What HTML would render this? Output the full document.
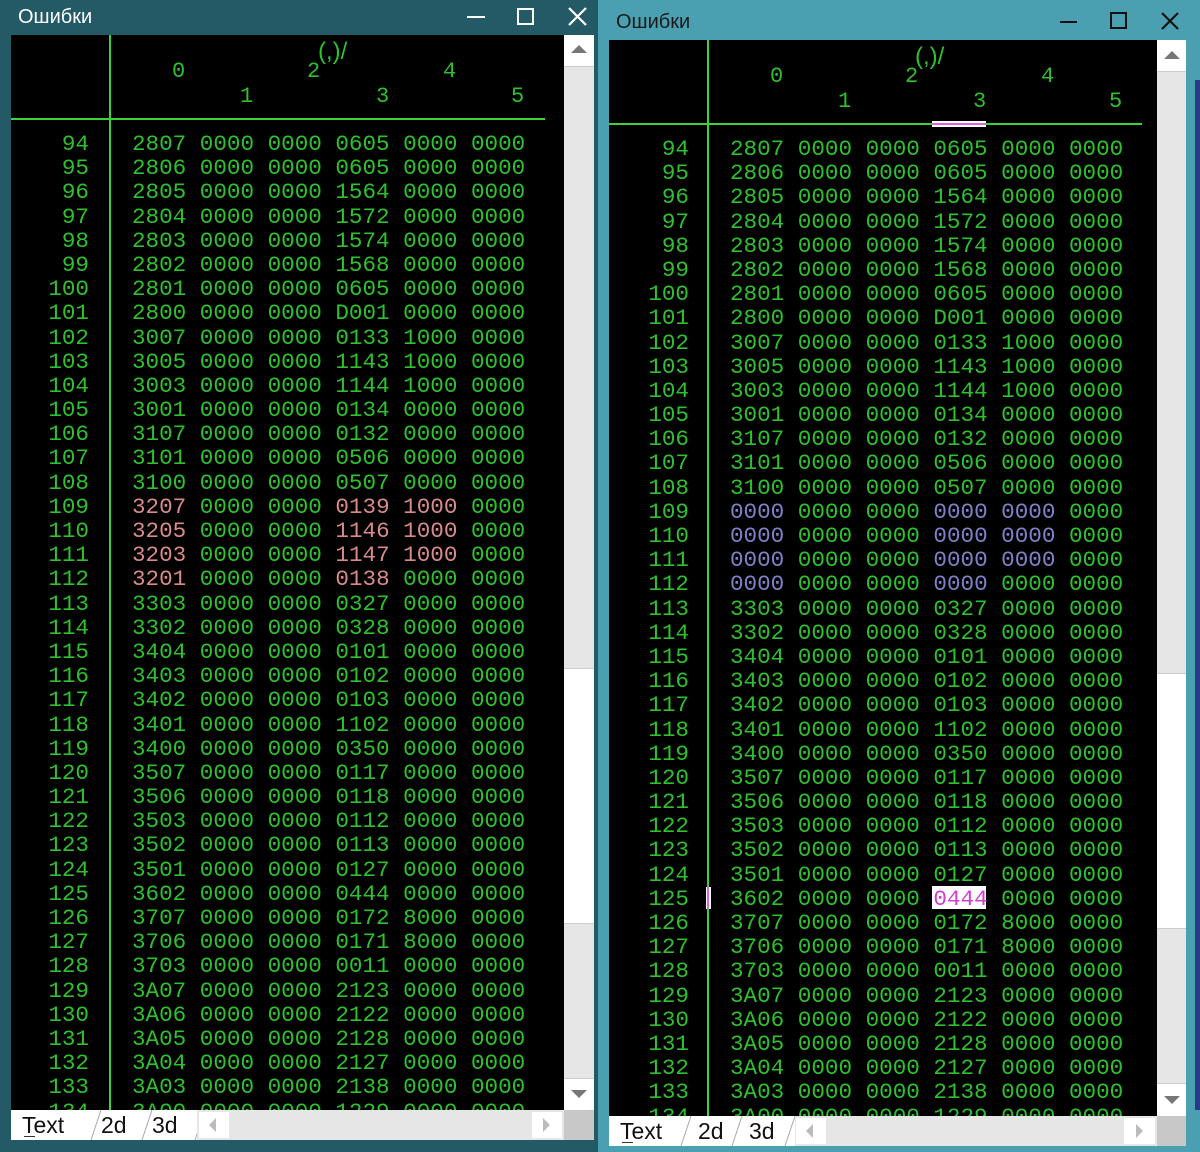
<!DOCTYPE html>
<html><head><meta charset="utf-8"><style>
*{margin:0;padding:0;box-sizing:border-box}
body{width:1200px;height:1152px;overflow:hidden;background:#4a9fb0;position:relative;font-family:"Liberation Sans",sans-serif}
.abs{position:absolute}
.win1{left:0;top:0;width:598px;height:1152px;background:#245a66}
.win2{left:598px;top:0;width:590px;height:1152px;background:#4a9fb0}
.title{font-size:20px}
.blk{background:#000;overflow:hidden}
pre{position:absolute;font-family:"Liberation Mono",monospace;font-size:22.6px;line-height:24.18px;color:#2ec02e;white-space:pre}
.num{text-align:right}
.r{color:#d88a8a}.p{color:#8080c8}
.hd{position:absolute;font-family:"Liberation Mono",monospace;font-size:22px;color:#2ec02e;line-height:22px}
.vl{position:absolute;background:#3ad43a;width:2px}
.hl{position:absolute;background:#3ad43a;height:2px}
.sb{background:#e6e6e6}
.btn{background:#fff}
.tri{width:0;height:0;position:absolute}
.tabs{background:#fff;font-size:22px;color:#111}
.tl{position:absolute;font-size:23px;color:#111}
</style></head><body>
<div class="abs win1"></div>
<div class="abs win2"></div>
<div class="abs" style="left:1188px;top:0;width:12px;height:1152px;background:#4a9fb0"></div>
<div class="abs" style="left:1195px;top:80px;width:5px;height:1030px;background:#2a3a8a"></div>

<div class="abs title" style="left:18px;top:6px;color:#fff">Ошибки</div>
<div class="abs" style="left:467px;top:16px;width:18px;height:2px;background:#fff"></div>
<div class="abs" style="left:517px;top:8px;width:17px;height:17px;border:2px solid #fff"></div>
<svg class="abs" style="left:567px;top:6px" width="21" height="21"><path d="M2 2L19 19M19 2L2 19" stroke="#fff" stroke-width="2.2"/></svg>

<div class="abs blk" style="left:11px;top:35px;width:553px;height:1075px">
<div class="vl" style="left:98px;top:0;height:1075px"></div>
<div class="hl" style="left:0;top:83px;width:534px"></div>
<div class="hd" style="left:307px;top:6px;font-family:'Liberation Sans';font-size:24px">(,)/</div>
<div class="hd" style="left:161px;top:26px">0</div>
<div class="hd" style="left:229px;top:51px">1</div>
<div class="hd" style="left:296px;top:26px">2</div>
<div class="hd" style="left:365px;top:51px">3</div>
<div class="hd" style="left:432px;top:26px">4</div>
<div class="hd" style="left:500px;top:51px">5</div>
<pre class="num" style="right:475px;top:97px">94
95
96
97
98
99
100
101
102
103
104
105
106
107
108
109
110
111
112
113
114
115
116
117
118
119
120
121
122
123
124
125
126
127
128
129
130
131
132
133
134</pre>
<pre style="left:121px;top:97px">2807 0000 0000 0605 0000 0000
2806 0000 0000 0605 0000 0000
2805 0000 0000 1564 0000 0000
2804 0000 0000 1572 0000 0000
2803 0000 0000 1574 0000 0000
2802 0000 0000 1568 0000 0000
2801 0000 0000 0605 0000 0000
2800 0000 0000 D001 0000 0000
3007 0000 0000 0133 1000 0000
3005 0000 0000 1143 1000 0000
3003 0000 0000 1144 1000 0000
3001 0000 0000 0134 0000 0000
3107 0000 0000 0132 0000 0000
3101 0000 0000 0506 0000 0000
3100 0000 0000 0507 0000 0000
<span class="r">3207</span> 0000 0000 <span class="r">0139 1000</span> 0000
<span class="r">3205</span> 0000 0000 <span class="r">1146 1000</span> 0000
<span class="r">3203</span> 0000 0000 <span class="r">1147 1000</span> 0000
<span class="r">3201</span> 0000 0000 <span class="r">0138</span> 0000 0000
3303 0000 0000 0327 0000 0000
3302 0000 0000 0328 0000 0000
3404 0000 0000 0101 0000 0000
3403 0000 0000 0102 0000 0000
3402 0000 0000 0103 0000 0000
3401 0000 0000 1102 0000 0000
3400 0000 0000 0350 0000 0000
3507 0000 0000 0117 0000 0000
3506 0000 0000 0118 0000 0000
3503 0000 0000 0112 0000 0000
3502 0000 0000 0113 0000 0000
3501 0000 0000 0127 0000 0000
3602 0000 0000 0444 0000 0000
3707 0000 0000 0172 8000 0000
3706 0000 0000 0171 8000 0000
3703 0000 0000 0011 0000 0000
3A07 0000 0000 2123 0000 0000
3A06 0000 0000 2122 0000 0000
3A05 0000 0000 2128 0000 0000
3A04 0000 0000 2127 0000 0000
3A03 0000 0000 2138 0000 0000
3A00 0000 0000 1229 0000 0000</pre>
</div>
<div class="abs sb" style="left:564px;top:35px;width:30px;height:1075px"></div>
<div class="abs btn" style="left:564px;top:35px;width:30px;height:32px;border-bottom:1px solid #ccc"></div>
<div class="tri" style="left:571px;top:45px;border-left:8px solid transparent;border-right:8px solid transparent;border-bottom:8px solid #777"></div>
<div class="abs btn" style="left:564px;top:668px;width:30px;height:256px;border-top:1px solid #ccc;border-bottom:1px solid #ccc"></div>
<div class="abs btn" style="left:564px;top:1078px;width:30px;height:32px;border-top:1px solid #ccc"></div>
<div class="tri" style="left:571px;top:1090px;border-left:8px solid transparent;border-right:8px solid transparent;border-top:8px solid #777"></div>
<div class="abs tabs" style="left:11px;top:1110px;width:553px;height:30px"></div>
<div class="tl" style="left:22px;top:1112px">Text</div>
<div class="abs" style="left:24px;top:1136px;width:11px;height:1px;background:#333"></div>
<svg class="abs" style="left:80px;top:1110px" width="130" height="30"><path d="M11 30L21 0M62 30L72 0M115 30L125 0" stroke="#aaa" stroke-width="1"/></svg>
<div class="tl" style="left:101px;top:1112px">2d</div>
<div class="tl" style="left:152px;top:1112px">3d</div>
<div class="abs sb" style="left:197px;top:1110px;width:367px;height:30px"></div>
<div class="abs btn" style="left:199px;top:1112px;width:30px;height:26px"></div>
<div class="tri" style="left:209px;top:1118px;border-top:7px solid transparent;border-bottom:7px solid transparent;border-right:7px solid #bbb"></div>
<div class="abs btn" style="left:532px;top:1112px;width:30px;height:26px"></div>
<div class="tri" style="left:543px;top:1118px;border-top:7px solid transparent;border-bottom:7px solid transparent;border-left:7px solid #bbb"></div>
<div class="abs" style="left:564px;top:1110px;width:30px;height:30px;background:#c8c8c8"></div>

<div class="abs title" style="left:616px;top:11px;color:#1a1a1a">Ошибки</div>
<div class="abs" style="left:1060px;top:21px;width:17px;height:2px;background:#111"></div>
<div class="abs" style="left:1110px;top:12px;width:17px;height:17px;border:2px solid #111"></div>
<svg class="abs" style="left:1160px;top:11px" width="20" height="20"><path d="M2 2L18 18M18 2L2 18" stroke="#111" stroke-width="2.2"/></svg>

<div class="abs blk" style="left:609px;top:40px;width:548px;height:1076px">
<div class="vl" style="left:98px;top:0;height:1076px"></div>
<div class="hl" style="left:0;top:83px;width:533px"></div>
<div class="abs" style="left:323px;top:81px;width:54px;height:6px;background:#fff"></div>
<div class="abs" style="left:323px;top:83px;width:54px;height:2px;background:#e060e0"></div>
<div class="abs" style="left:97px;top:847px;width:5px;height:22px;background:#fff"></div>
<div class="abs" style="left:98px;top:847px;width:2px;height:22px;background:#e060e0"></div>
<div class="abs" style="left:323px;top:846px;width:54px;height:23px;background:#fff"></div>
<div class="hd" style="left:306px;top:6px;font-family:'Liberation Sans';font-size:24px">(,)/</div>
<div class="hd" style="left:161px;top:26px">0</div>
<div class="hd" style="left:229px;top:51px">1</div>
<div class="hd" style="left:296px;top:26px">2</div>
<div class="hd" style="left:364px;top:51px">3</div>
<div class="hd" style="left:432px;top:26px">4</div>
<div class="hd" style="left:500px;top:51px">5</div>
<pre class="num" style="right:468px;top:97px">94
95
96
97
98
99
100
101
102
103
104
105
106
107
108
109
110
111
112
113
114
115
116
117
118
119
120
121
122
123
124
125
126
127
128
129
130
131
132
133
134</pre>
<pre style="left:121px;top:97px">2807 0000 0000 0605 0000 0000
2806 0000 0000 0605 0000 0000
2805 0000 0000 1564 0000 0000
2804 0000 0000 1572 0000 0000
2803 0000 0000 1574 0000 0000
2802 0000 0000 1568 0000 0000
2801 0000 0000 0605 0000 0000
2800 0000 0000 D001 0000 0000
3007 0000 0000 0133 1000 0000
3005 0000 0000 1143 1000 0000
3003 0000 0000 1144 1000 0000
3001 0000 0000 0134 0000 0000
3107 0000 0000 0132 0000 0000
3101 0000 0000 0506 0000 0000
3100 0000 0000 0507 0000 0000
<span class="p">0000</span> 0000 0000 <span class="p">0000 0000</span> 0000
<span class="p">0000</span> 0000 0000 <span class="p">0000 0000</span> 0000
<span class="p">0000</span> 0000 0000 <span class="p">0000 0000</span> 0000
<span class="p">0000</span> 0000 0000 <span class="p">0000</span> 0000 0000
3303 0000 0000 0327 0000 0000
3302 0000 0000 0328 0000 0000
3404 0000 0000 0101 0000 0000
3403 0000 0000 0102 0000 0000
3402 0000 0000 0103 0000 0000
3401 0000 0000 1102 0000 0000
3400 0000 0000 0350 0000 0000
3507 0000 0000 0117 0000 0000
3506 0000 0000 0118 0000 0000
3503 0000 0000 0112 0000 0000
3502 0000 0000 0113 0000 0000
3501 0000 0000 0127 0000 0000
3602 0000 0000 <span style="color:#d040d0">0444</span> 0000 0000
3707 0000 0000 0172 8000 0000
3706 0000 0000 0171 8000 0000
3703 0000 0000 0011 0000 0000
3A07 0000 0000 2123 0000 0000
3A06 0000 0000 2122 0000 0000
3A05 0000 0000 2128 0000 0000
3A04 0000 0000 2127 0000 0000
3A03 0000 0000 2138 0000 0000
3A00 0000 0000 1229 0000 0000</pre>
</div>
<div class="abs sb" style="left:1157px;top:40px;width:29px;height:1076px"></div>
<div class="abs btn" style="left:1157px;top:40px;width:29px;height:32px;border-bottom:1px solid #ccc"></div>
<div class="tri" style="left:1164px;top:51px;border-left:8px solid transparent;border-right:8px solid transparent;border-bottom:8px solid #777"></div>
<div class="abs btn" style="left:1157px;top:673px;width:29px;height:256px;border-top:1px solid #ccc;border-bottom:1px solid #ccc"></div>
<div class="abs btn" style="left:1157px;top:1083px;width:29px;height:33px;border-top:1px solid #ccc"></div>
<div class="tri" style="left:1164px;top:1096px;border-left:8px solid transparent;border-right:8px solid transparent;border-top:8px solid #777"></div>
<div class="abs tabs" style="left:609px;top:1116px;width:548px;height:30px"></div>
<div class="tl" style="left:620px;top:1118px">Text</div>
<div class="abs" style="left:622px;top:1142px;width:11px;height:1px;background:#333"></div>
<svg class="abs" style="left:678px;top:1116px" width="130" height="30"><path d="M3 30L13 0M54 30L64 0M107 30L117 0" stroke="#aaa" stroke-width="1"/></svg>
<div class="tl" style="left:698px;top:1118px">2d</div>
<div class="tl" style="left:749px;top:1118px">3d</div>
<div class="abs sb" style="left:795px;top:1116px;width:362px;height:30px"></div>
<div class="abs btn" style="left:796px;top:1118px;width:30px;height:26px"></div>
<div class="tri" style="left:806px;top:1124px;border-top:7px solid transparent;border-bottom:7px solid transparent;border-right:7px solid #bbb"></div>
<div class="abs btn" style="left:1124px;top:1118px;width:31px;height:26px"></div>
<div class="tri" style="left:1136px;top:1124px;border-top:7px solid transparent;border-bottom:7px solid transparent;border-left:7px solid #bbb"></div>
<div class="abs" style="left:1157px;top:1116px;width:29px;height:30px;background:#c8c8c8"></div>
</body></html>
